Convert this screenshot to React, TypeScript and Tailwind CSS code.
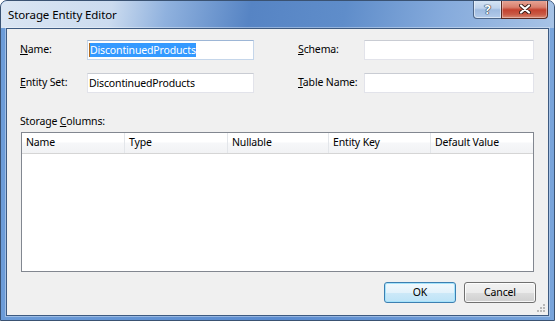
import React from "react";

function TextBox({ children, focused }: { children?: React.ReactNode; focused?: boolean }) {
  return (
    <div
      className={
        "flex h-[20px] items-center border bg-white pl-[1px] " +
        (focused
          ? "border-[#c5d6ea] border-t-[#9db6d6]"
          : "border-[#e2e3ea] border-t-[#c9ccd3]")
      }
    >
      {children}
    </div>
  );
}

export default function App() {
  return (
    <div className="h-[321px] w-[555px] bg-white font-['Noto_Sans',sans-serif] text-[10.5px] tracking-[-0.15px] text-black">
      <div className="relative flex h-[321px] w-[555px] flex-col overflow-hidden rounded-t-[7px] border border-[#3a5272] bg-[linear-gradient(to_right,#6c9cd8_0%,#5a8bcf_50%,#78a4db_100%)]">
        {/* Title bar */}
        <div className="flex h-[27px] shrink-0 items-start bg-[linear-gradient(100deg,#dbe6f3_0%,#cbdbef_20%,#8fb1de_30%,#5684c4_45%,#5f8dca_62%,#86abdc_80%,#a7c3e6_100%)]">
          <div className="pl-[7px] pt-[6px] text-[11.5px] leading-[16px] tracking-[-0.1px] text-black">
            Storage Entity Editor
          </div>
          <div className="-mt-[1px] ml-auto mr-[6px] flex">
            <div className="flex h-[19px] w-[29px] items-center justify-center rounded-bl-[4px] border border-t-0 border-[#4d6587] bg-[linear-gradient(#d8e6f5_0%,#bfd3ec_45%,#9fbbe0_55%,#b3cbea_100%)] shadow-[inset_0_0_0_1px_rgba(255,255,255,0.5)]">
              <span className="text-[13px] font-bold leading-none text-white [text-shadow:0_0_1px_#1d2a3c,0_0_1px_#1d2a3c,0_0_1px_#1d2a3c]">
                ?
              </span>
            </div>
            <div className="-ml-[1px] flex h-[19px] w-[47px] items-center justify-center rounded-br-[4px] border border-t-0 border-[#5b2a22] bg-[linear-gradient(#e9a99a_0%,#d9806e_40%,#c4422f_55%,#c95a45_80%,#d88a74_100%)] shadow-[inset_0_0_0_1px_rgba(255,255,255,0.35)]">
              <svg width="12" height="10" viewBox="0 0 12 10">
                <path d="M2 1.5 L10 8.5 M10 1.5 L2 8.5" stroke="#3a1c16" strokeWidth="4" strokeLinecap="round" />
                <path d="M2 1.5 L10 8.5 M10 1.5 L2 8.5" stroke="#ffffff" strokeWidth="2.2" strokeLinecap="round" />
              </svg>
            </div>
          </div>
        </div>

        {/* Client */}
        <div className="relative mx-[5px] mb-[4px] flex flex-1 flex-col border border-[#3d5a80] bg-[#f0f0f0] shadow-[0_0_0_1px_rgba(255,255,255,0.35)]">
          {/* Row 1 */}
          <div className="mt-[11px] flex items-center pl-[13px]">
            <div className="w-[67px]">
              <u>N</u>ame:
            </div>
            <div className="w-[167px]">
              <TextBox focused>
                <span className="h-[14px] w-[1px] bg-[#b36b1f]" />
                <span className="bg-[#3399ff] leading-[14px] text-white">DiscontinuedProducts</span>
              </TextBox>
            </div>
            <div className="w-[44px]" />
            <div className="w-[66px]">
              <u>S</u>chema:
            </div>
            <div className="w-[170px]">
              <TextBox />
            </div>
          </div>

          {/* Row 2 */}
          <div className="mt-[13px] flex items-center pl-[13px]">
            <div className="w-[67px]">
              <u>E</u>ntity Set:
            </div>
            <div className="w-[167px]">
              <TextBox>
                <span className="leading-[14px]">DiscontinuedProducts</span>
              </TextBox>
            </div>
            <div className="w-[44px]" />
            <div className="w-[66px]">
              <u>T</u>able Name:
            </div>
            <div className="w-[170px]">
              <TextBox />
            </div>
          </div>

          {/* Storage columns label */}
          <div className="mt-[21px] pl-[13px] leading-[14px]">
            Storage <u>C</u>olumns:
          </div>

          {/* List view */}
          <div className="ml-[14px] mt-[4px] flex h-[140px] w-[513px] flex-col border border-[#828790] bg-white">
            <div className="flex h-[21px] border-b border-[#d5d5d5] bg-[linear-gradient(#ffffff_0%,#ffffff_45%,#f6f7f9_50%,#f1f2f4_100%)]">
              <div className="flex w-[103px] items-center border-r border-[#e3e6ea] pl-[4px]">Name</div>
              <div className="flex w-[103px] items-center border-r border-[#e3e6ea] pl-[4px]">Type</div>
              <div className="flex w-[101px] items-center border-r border-[#e3e6ea] pl-[4px]">Nullable</div>
              <div className="flex w-[102px] items-center border-r border-[#e3e6ea] pl-[4px]">Entity Key</div>
              <div className="flex flex-1 items-center pl-[4px]">Default Value</div>
            </div>
          </div>

          {/* Buttons */}
          <div className="mt-[10px] flex justify-end gap-[8px] pr-[12px]">
            <button className="flex h-[21px] w-[72px] items-center justify-center rounded-[3px] border border-[#3c7fb1] bg-[linear-gradient(#f2f9fd_0%,#e3f2fb_50%,#cde9f8_51%,#bde3f7_100%)] shadow-[inset_0_0_0_1px_#a6e3fb]">
              OK
            </button>
            <button className="flex h-[21px] w-[72px] items-center justify-center rounded-[3px] border border-[#707070] bg-[linear-gradient(#f2f2f2_0%,#ebebeb_50%,#dddddd_51%,#cfcfcf_100%)] shadow-[inset_0_0_0_1px_rgba(255,255,255,0.8)]">
              Cancel
            </button>
          </div>

          {/* Size grip */}
          <svg className="absolute bottom-[2px] right-[2px]" width="10" height="10" viewBox="0 0 10 10">
            <rect x="7" y="1" width="2" height="2" fill="#b8b8b8" />
            <rect x="4" y="4" width="2" height="2" fill="#b8b8b8" />
            <rect x="7" y="4" width="2" height="2" fill="#b8b8b8" />
            <rect x="1" y="7" width="2" height="2" fill="#b8b8b8" />
            <rect x="4" y="7" width="2" height="2" fill="#b8b8b8" />
            <rect x="7" y="7" width="2" height="2" fill="#b8b8b8" />
          </svg>
        </div>
      </div>
    </div>
  );
}
